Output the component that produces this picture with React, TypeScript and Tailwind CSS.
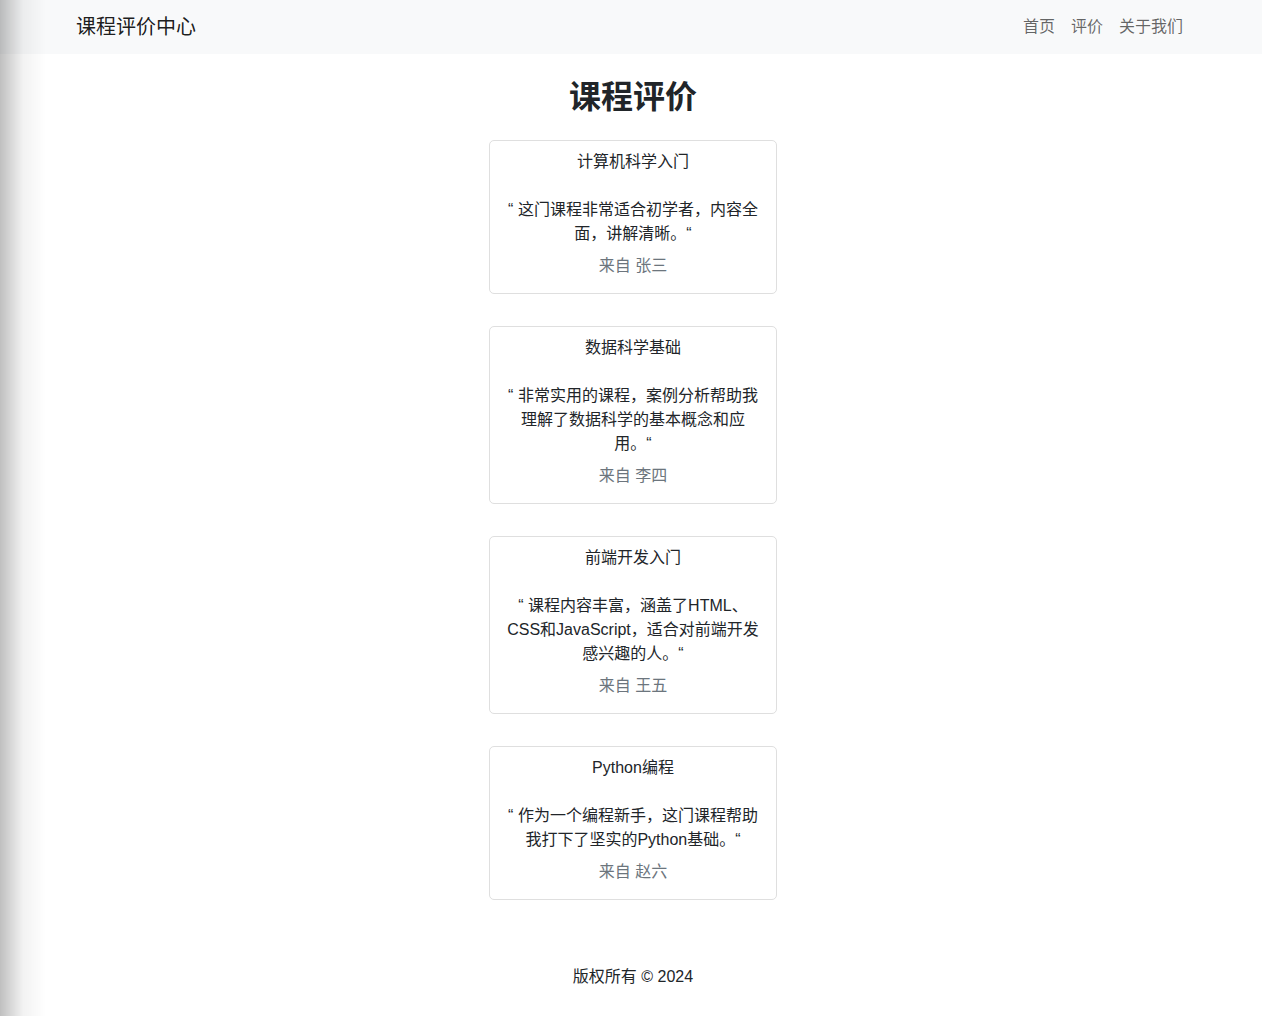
const reviews = [
  {
    course: '计算机科学入门',
    text: '“ 这门课程非常适合初学者，内容全面，讲解清晰。“',
    author: '张三',
  },
  {
    course: '数据科学基础',
    text: '“ 非常实用的课程，案例分析帮助我理解了数据科学的基本概念和应用。“',
    author: '李四',
  },
  {
    course: '前端开发入门',
    text: '“ 课程内容丰富，涵盖了HTML、CSS和JavaScript，适合对前端开发感兴趣的人。“',
    author: '王五',
  },
  {
    course: 'Python编程',
    text: '“ 作为一个编程新手，这门课程帮助我打下了坚实的Python基础。“',
    author: '赵六',
  },
];

export default function App() {
  return (
    <div
      className="min-h-screen bg-white text-[#212529] text-base leading-6"
      style={{ fontFamily: '"Liberation Sans", "Noto Sans CJK SC", sans-serif' }}
    >
      <div className="pointer-events-none fixed inset-y-0 left-0 w-[46px] bg-linear-to-r from-black/25 via-black/5 to-transparent" />

      <nav className="h-[54px] bg-[#f8f9fa] flex items-center justify-between pl-[76px] pr-[71px]">
        <a className="text-xl text-black/90">课程评价中心</a>
        <ul className="flex">
          {['首页', '评价', '关于我们'].map((item) => (
            <li key={item}>
              <a className="block px-2 text-black/60">{item}</a>
            </li>
          ))}
        </ul>
      </nav>

      <main className="pt-6 pl-1 flex flex-col items-center">
        <h2 className="text-[32px] leading-[38px] font-bold mb-6">课程评价</h2>
        {reviews.map((r) => (
          <div
            key={r.course}
            className="w-[288px] mb-[32px] border border-[#dfdfdf] rounded-[5px] px-4 pt-[9px] pb-[15px] text-center"
          >
            <div className="mb-6">{r.course}</div>
            <p>{r.text}</p>
            <div className="mt-2 text-[#6c757d]">来自 {r.author}</div>
          </div>
        ))}
      </main>

      <footer className="pt-[33px] pb-7 pl-1 text-center">版权所有 © 2024</footer>
    </div>
  );
}
